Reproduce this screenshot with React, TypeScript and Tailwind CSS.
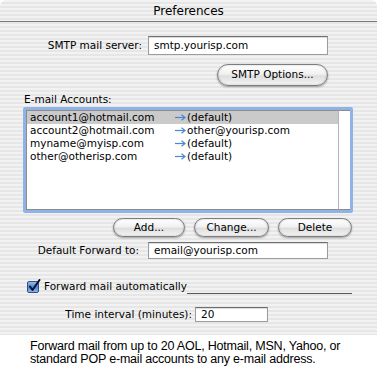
import React from "react";

// ── Aqua bits ────────────────────────────────────────────────────────────────

function PillButton({ label, className }: { label: string; className?: string }) {
  return (
    <div
      className={
        "flex items-center justify-center rounded-full border border-[#7d7d7d] bg-[linear-gradient(#ffffff,#f1f1f1_45%,#dedede_55%,#f4f4f4)] shadow-[0_1px_2px_rgba(0,0,0,0.35),inset_0_0_2px_rgba(0,0,0,0.25)] text-black " +
        (className ?? "")
      }
    >
      {label}
    </div>
  );
}

function TextField({ value, className }: { value: string; className?: string }) {
  return (
    <div
      className={
        "flex items-center bg-white border border-[#9c9c9c] border-t-[#6e6e6e] shadow-[inset_0_1px_1px_rgba(0,0,0,0.15)] pl-[5px] text-black " +
        (className ?? "")
      }
    >
      {value}
    </div>
  );
}

function CheckBox() {
  return (
    <svg width="14" height="14" viewBox="0 0 14 14" className="shrink-0">
      <defs>
        <linearGradient id="cb" x1="0" y1="0" x2="0" y2="1">
          <stop offset="0" stopColor="#9cc1f0" />
          <stop offset="0.5" stopColor="#4f86d6" />
          <stop offset="1" stopColor="#8fb8ee" />
        </linearGradient>
      </defs>
      <rect x="0.5" y="2.5" width="11" height="11" rx="1.5" fill="url(#cb)" stroke="#35527f" />
      <path d="M3 7.5 L5.5 11 L12.5 1" fill="none" stroke="#0b1330" strokeWidth="2" strokeLinecap="round" strokeLinejoin="round" />
    </svg>
  );
}

function Arrow() {
  return (
    <svg width="11" height="7" viewBox="0 0 11 7" className="shrink-0 mt-[3px]">
      <path d="M0 3.5 H9" stroke="#4a86d8" strokeWidth="1.2" />
      <path d="M6.5 0.8 L10 3.5 L6.5 6.2" fill="none" stroke="#4a86d8" strokeWidth="1.2" />
    </svg>
  );
}

const accounts = [
  { from: "account1@hotmail.com", to: "(default)", selected: true },
  { from: "account2@hotmail.com", to: "other@yourisp.com" },
  { from: "myname@myisp.com", to: "(default)" },
  { from: "other@otherisp.com", to: "(default)" },
];

// ── Page ─────────────────────────────────────────────────────────────────────

export default function App() {
  return (
    <div className="w-[377px] h-[370px] bg-white overflow-hidden font-['DejaVu_Sans',sans-serif] text-[10.5px] text-black">
      {/* Preferences sheet */}
      <div className="h-[335px] rounded-t-[6px] bg-[repeating-linear-gradient(#f2f2f2_0px,#f2f2f2_2px,#e6e6e6_2px,#e6e6e6_4px)] flex flex-col">
        <div className="h-[22px] border-b border-[#7a7a7a] flex items-center justify-center text-[12px] pt-[1px]">
          Preferences
        </div>

        {/* SMTP server */}
        <div className="flex items-center mt-[14px] h-[19px]">
          <div className="w-[142px] text-right">SMTP mail server:</div>
          <TextField value="smtp.yourisp.com" className="ml-[6px] w-[180px] h-[19px]" />
        </div>

        <div className="flex justify-end pr-[49px] mt-[9px]">
          <PillButton label="SMTP Options..." className="w-[111px] h-[22px]" />
        </div>

        {/* Accounts list */}
        <div className="pl-[24px] mt-[7px] h-[13px] leading-[13px]">E-mail Accounts:</div>
        <div className="ml-[23px] mt-[1px] w-[330px] h-[106px] border-[3px] border-[#8fb3e6] rounded-[2px] bg-white flex">
          <div className="flex-1 border border-[#8c8c8c] border-r-0 flex flex-col">
            {accounts.map((a) => (
              <div
                key={a.from}
                className={"flex h-[13px] leading-[13px] pl-[3px] " + (a.selected ? "bg-[#cacaca]" : "")}
              >
                <span className="w-[145px]">{a.from}</span>
                <span className="w-[12px] flex">
                  <Arrow />
                </span>
                <span>{a.to}</span>
              </div>
            ))}
          </div>
          <div className="w-[12px] border-l border-[#b5b5b5] border-t border-t-[#8c8c8c] border-b border-b-[#8c8c8c] bg-white" />
        </div>

        {/* Buttons */}
        <div className="flex justify-end gap-[9px] pr-[25px] mt-[5px]">
          <PillButton label="Add..." className="w-[72px] h-[19px]" />
          <PillButton label="Change..." className="w-[75px] h-[19px]" />
          <PillButton label="Delete" className="w-[74px] h-[19px]" />
        </div>

        {/* Default forward */}
        <div className="flex items-center mt-[5px] h-[17px]">
          <div className="w-[139px] text-right">Default Forward to:</div>
          <TextField value="email@yourisp.com" className="ml-[9px] w-[180px] h-[17px]" />
        </div>

        {/* Forward automatically */}
        <div className="flex items-end mt-[20px] pl-[27px] pr-[25px] h-[14px]">
          <CheckBox />
          <span className="ml-[3px] leading-[13px]">Forward mail automatically</span>
          <div className="flex-1 border-b border-[#555] mb-[-1px]" />
        </div>

        {/* Time interval */}
        <div className="flex items-center mt-[14px] h-[15px]">
          <div className="w-[192px] text-right">Time interval (minutes):</div>
          <TextField value="20" className="ml-[3px] w-[73px] h-[15px]" />
        </div>
      </div>

      {/* Caption */}
      <div className="pl-[30px] pt-[5px] font-['Liberation_Sans',Arial,sans-serif] text-[12.5px] leading-[13px] tracking-[-0.2px]">
        <div>Forward mail from up to 20 AOL, Hotmail, MSN, Yahoo, or</div>
        <div>standard POP e-mail accounts to any e-mail address.</div>
      </div>
    </div>
  );
}
